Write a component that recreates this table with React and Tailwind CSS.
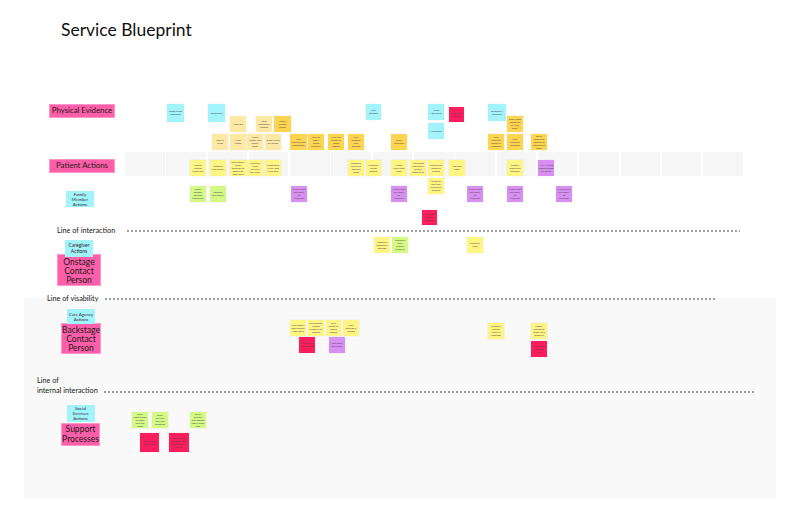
import React from "react";

const C = {
  cyan: "bg-[#a3f3fb]",
  pale: "bg-[#fde9a3]",
  gold: "bg-[#fdd550]",
  yellow: "bg-[#fff585]",
  green: "bg-[#d5f985]",
  purple: "bg-[#d78ff2]",
  red: "bg-[#fc1d5c]",
};

const notes = [
  // Physical evidence
  [167, 104, 17, 18, "cyan", "Tactile home adaptions"],
  [208, 104, 17, 18, "cyan", "Telephones"],
  [230, 116, 16, 16, "pale", "Video call"],
  [256, 116, 16, 16, "pale", "Best emergency contact"],
  [274, 116, 17, 16, "gold", "Family creates profile"],
  [212, 134, 16, 16, "pale", "Sign up forms"],
  [230, 134, 16, 16, "pale", "Make Profile"],
  [247, 134, 16, 16, "pale", "Virtual Health Visit (family rights)"],
  [265, 134, 16, 16, "pale", "Order a care pill screen"],
  [290, 134, 17, 16, "gold", "Why discount care professional"],
  [308, 134, 16, 16, "gold", "Why do family afford caregiver"],
  [328, 134, 16, 16, "gold", "Why talk caregiver about patient"],
  [348, 134, 16, 16, "gold", "Why caretake care package"],
  [366, 104, 15, 16, "cyan", "Care package"],
  [391, 134, 16, 16, "gold", "Is this involved?"],
  [428, 104, 16, 16, "cyan", "Home Appliances"],
  [428, 123, 16, 16, "cyan", "Medication"],
  [449, 107, 15, 15, "red", "How does it work?"],
  [488, 104, 18, 17, "cyan", "Telephone / computer"],
  [507, 116, 16, 16, "gold", "Family adds caregivers to \u201ccare team\u201d"],
  [488, 134, 16, 16, "gold", "Why discount based on condition"],
  [507, 134, 16, 16, "gold", "Why caretaker feedback"],
  [531, 134, 16, 16, "gold", "Do all caregivers connect to activities of needs"],
  // Patient actions
  [190, 160, 16, 16, "yellow", "Patient decides needs care"],
  [210, 160, 16, 16, "yellow", "contacts care agency"],
  [230, 160, 16, 16, "yellow", "Care agency sends someone to meet with elder adult"],
  [247, 160, 16, 16, "yellow", "Finds out what services they have"],
  [265, 160, 16, 16, "yellow", "Understand a how long it will take"],
  [348, 160, 16, 16, "yellow", "Caregiver arrives at patient's home"],
  [366, 160, 15, 16, "yellow", "Caregiver meets patient"],
  [391, 160, 16, 16, "yellow", "Get to know each other"],
  [410, 160, 16, 16, "yellow", "Ask patient about their routine, wants to do"],
  [428, 160, 16, 16, "yellow", "Repeat care caregiver process"],
  [428, 178, 16, 16, "yellow", "Caregiver files (tiny food to be washed)"],
  [449, 160, 16, 16, "yellow", "Job gets done"],
  [507, 160, 16, 16, "yellow", "Patient might give feedback"],
  [538, 160, 16, 16, "purple", "HIPAA being communicated (do open?)"],
  // Family member
  [190, 186, 16, 16, "green", "Family member decides needs care"],
  [210, 186, 16, 16, "green", "contacts care agency"],
  [291, 186, 16, 16, "purple", "Where else can family be involved?"],
  [391, 186, 16, 16, "purple", "Where else can family be involved?"],
  [467, 186, 16, 16, "purple", "Where else can family be involved?"],
  [507, 186, 16, 16, "purple", "Where else can family be involved?"],
  [556, 186, 16, 16, "purple", "Where else can family be involved?"],
  [422, 210, 15, 15, "red", "How to access process?"],
  // Caregiver
  [374, 237, 16, 16, "yellow", "Caregiver meets care package"],
  [392, 237, 16, 16, "green", "Someone gets another caregiver"],
  [467, 237, 16, 16, "yellow", "Caregiver quits"],
  // Backstage
  [290, 320, 16, 16, "yellow", "Care agency gets process elder adult"],
  [308, 320, 16, 16, "yellow", "Care agency assigns caregiver to patient"],
  [326, 320, 15, 16, "yellow", "Tells caregiver about patient"],
  [343, 320, 16, 16, "yellow", "Care package is created"],
  [299, 337, 16, 16, "red", "Who is the process rep?"],
  [329, 337, 16, 16, "purple", "Let's make the switch"],
  [488, 323, 16, 16, "yellow", "Caregiver update family of condition"],
  [531, 323, 16, 16, "yellow", "Agency decides to bring a new caregiver"],
  [531, 341, 16, 16, "red", "What is the process like?"],
  // Support
  [132, 412, 16, 16, "green", "Once patient gets on social services needs"],
  [152, 412, 16, 16, "green", "social services also help adaptions"],
  [190, 412, 16, 16, "green", "social services also decides family home care"],
  [140, 433, 19, 19, "red", "What is this process like?"],
  [169, 433, 20, 19, "red", "What other things do social services care about?"],
];

function Note({ n }) {
  const [x, y, w, h, c, t] = n;
  return (
    <div
      className={`absolute ${C[c]} flex items-center justify-center text-center px-[1.5px] text-[2.4px] leading-[3px] text-[#3f3f3f] shadow-[0_0_0_0.5px_rgba(0,0,0,0.05)]`}
      style={{ left: x, top: y, width: w, height: h }}
    >
      {t}
    </div>
  );
}

const pink =
  "bg-[#ff5ea9] border border-[#ff94c8] flex items-center justify-center text-center text-[#1a1a1a]";
const cyan =
  "relative z-10 bg-[#a3f3fb] flex items-center justify-center text-center text-[#2a2a2a]";
const dots =
  "flex-1 h-[2px] bg-[radial-gradient(circle,#6b6b6b_0.6px,transparent_0.9px)] bg-[length:4px_2px]";
const lineText = "text-[7.3px] leading-[10px] text-[#222] whitespace-nowrap";

export default function App() {
  return (
    <div
      className="relative w-[800px] h-[518px] bg-white overflow-hidden text-[#1f1f1f]"
      style={{ fontFamily: "Lato, 'Liberation Sans', sans-serif" }}
    >
      {/* Backstage grey panel */}
      <div className="absolute left-[24px] top-[298px] w-[752px] h-[200px] bg-[#f9f9f9]" />

      {/* title */}
      <div className="absolute left-[61px] top-[19px] text-[17.5px] leading-[22px] text-[#111]">
        Service Blueprint
      </div>

      {/* patient actions lane cells */}
      <div className="absolute left-[125px] top-[152px] flex gap-[1.8px]">
        {Array.from({ length: 15 }).map((_, i) => (
          <div key={i} className="w-[39.5px] h-[24px] bg-[#f6f6f6]" />
        ))}
      </div>

      {/* pink lane labels */}
      <div className="absolute left-[49px] top-[104px] flex flex-col gap-[41px]">
        <div className={`${pink} w-[66px] h-[14px] text-[7.8px] leading-none`}>Physical Evidence</div>
        <div className={`${pink} w-[66px] h-[14px] text-[7.8px] leading-none`}>Patient Actions</div>
      </div>

      <div className={`${cyan} absolute left-[66px] top-[191px] w-[28px] h-[16px] text-[4.4px] leading-[5px]`}>
        Family Member Actions
      </div>

      {/* Line of interaction */}
      <div className="absolute left-[57px] top-[226px] w-[683px] flex items-center gap-[11px]">
        <span className={lineText}>Line of interaction</span>
        <div className={dots} />
      </div>

      <div className="absolute left-[57px] top-[240px] w-[44px] flex flex-col items-center">
        <div className={`${cyan} w-[28px] h-[17px] text-[5px] leading-[5.6px]`}>Caregiver Actions</div>
        <div className={`${pink} -mt-[3px] w-[44px] h-[32px] pt-[3px] text-[8.5px] leading-[9px]`}>
          Onstage Contact Person
        </div>
      </div>

      {/* Line of visability */}
      <div className="absolute left-[47px] top-[294px] w-[668px] flex items-center gap-[6px]">
        <span className={lineText}>Line of visability</span>
        <div className={dots} />
      </div>

      <div className="absolute left-[61px] top-[309px] w-[40px] flex flex-col items-center">
        <div className={`${cyan} w-[28px] h-[15px] text-[4.4px] leading-[5px]`}>Care Agency Actions</div>
        <div className={`${pink} -mt-[1px] w-[40px] h-[31px] pt-[2px] text-[8.5px] leading-[9.3px]`}>
          Backstage Contact Person
        </div>
      </div>

      {/* Line of internal interaction */}
      <div className="absolute left-[37px] top-[376px] w-[717px] flex items-end gap-[5px]">
        <span className={lineText}>
          Line of
          <br />
          internal interaction
        </span>
        <div className={`${dots} mb-[3px]`} />
      </div>

      <div className="absolute left-[61px] top-[405px] w-[39px] flex flex-col items-center gap-[1px]">
        <div className={`${cyan} w-[28px] h-[17px] text-[4.4px] leading-[5px]`}>Social Services Actions</div>
        <div className={`${pink} w-[39px] h-[23px] text-[8.5px] leading-[9.3px]`}>Support Processes</div>
      </div>

      {notes.map((n, i) => (
        <Note key={i} n={n} />
      ))}
    </div>
  );
}
